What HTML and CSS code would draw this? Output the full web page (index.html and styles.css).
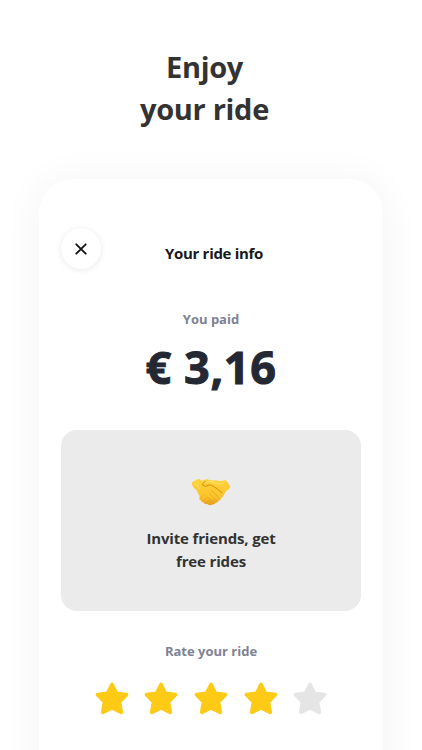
FILE: index.html
```html
<!DOCTYPE html>
<html lang="en">
<head>
<meta charset="utf-8">
<meta name="viewport" content="width=device-width, initial-scale=1">
<title>Your ride info</title>
<link rel="stylesheet" href="styles.css">
</head>
<body>
<svg class="defs" width="0" height="0" aria-hidden="true">
  <symbol id="star" viewBox="0 0 34 32">
    <path d="M17 2 21.4 10.8 31.4 12.2 24.4 19.4 26.2 29.8 17 25.4 7.8 29.8 9.6 19.4 2.6 12.2 12.6 10.8Z" fill="currentColor" stroke="currentColor" stroke-width="3.8" stroke-linejoin="round"/>
  </symbol>
</svg>
<main class="page">
  <h1 class="headline">Enjoy<br>your ride</h1>
  <section class="card">
    <header class="bar">
      <button class="close" aria-label="Close">
        <svg width="12" height="12" viewBox="0 0 12 12"><path d="M1.3 1.3 10.7 10.7M10.7 1.3 1.3 10.7" fill="none" stroke="#141619" stroke-width="1.9" stroke-linecap="round"/></svg>
      </button>
      <h2 class="title">Your ride info</h2>
    </header>
    <p class="label paid">You paid</p>
    <p class="amount">€ 3,16</p>
    <div class="invite">
      <svg class="hands" width="40" height="28" viewBox="0 0 40 28" aria-hidden="true">
        <defs>
          <linearGradient id="skin" x1="0" y1="0" x2="0" y2="1"><stop offset="0" stop-color="#ffd23b"/><stop offset=".7" stop-color="#fbc32b"/><stop offset="1" stop-color="#e39a16"/></linearGradient>
        </defs>
        <path d="M.8 5.8Q.5 4.2 1.8 3.7L6 1.4Q8 .6 9 1.5Q10.4 2.7 12 2.4Q14.5 .9 17.2 1.5L20.4 2.6Q24 1.6 27.5 2.8Q30.5 3.4 32.3 2.6Q34.4 1.6 35.6 3L39 7.8Q39.8 9.6 38.2 10.8Q35 12.6 33.8 15 33.2 17.4 31.4 19L30 20.2Q29.8 22.3 27.8 22.6 27 24.8 24.6 24.8 23.4 27 21.2 26.4 19.5 27.8 17.4 26.8L15.6 25.8Q13.3 26.6 12.5 24.3 10.3 24.4 10.2 22.4 7.8 21.9 8.3 19.7L8.7 18Q7 16 6.2 13.6Q5.6 11.4 3.2 10.2Q1.2 8.8.8 5.8Z" fill="url(#skin)"/>
        <path d="M14 3.2Q10.4 5.9 12 7.6 14.2 9.4 18 6.9L20.7 7.4Q25.7 9.8 30.9 14.8" fill="none" stroke="#d98b12" stroke-width="1" stroke-linecap="round"/>
        <path d="M20.1 12.3 28 19.4M17.8 15.2 25.3 22.1M16.6 19 22 24.2M9.6 20.4 12.5 17M12.2 23 15.8 19M15.5 25 18.5 21.7" fill="none" stroke="#e29b17" stroke-width=".6" stroke-linecap="round"/>
        <path d="M15.5 3.8Q19 2.8 23.6 4.8 28.5 6.4 32.5 5.2M4 6Q7 7.2 8.3 10.3" fill="none" stroke="#ffdf62" stroke-width="1.3" stroke-linecap="round"/>
      </svg>
      <p class="invite-text">Invite friends, get<br>free rides</p>
    </div>
    <p class="label rate">Rate your ride</p>
    <div class="stars">
      <svg class="star"><use href="#star"/></svg>
      <svg class="star"><use href="#star"/></svg>
      <svg class="star"><use href="#star"/></svg>
      <svg class="star"><use href="#star"/></svg>
      <svg class="star star-empty"><use href="#star"/></svg>
    </div>
  </section>
</main>
</body>
</html>
```
FILE: styles.css
```css
* { box-sizing: border-box; }
body, h1, h2, p { margin: 0; }
body {
  background: #fff;
  font-family: "Open Sans", "Noto Sans", sans-serif;
  font-weight: 700;
  text-align: center;
}
.defs { display: block; }
.page {
  height: 750px;
  padding: 46px 39px 0;
  overflow: hidden;
}
.headline {
  width: 331px;
  height: 84px;
  color: #333;
  font-size: 29px;
  line-height: 42px;
  letter-spacing: -.3px;
}
.card {
  width: 344px;
  height: 660px;
  margin-top: 49px;
  padding: 49px 22px 0;
  border-radius: 34px;
  background: #fff;
  box-shadow: 0 2px 40px rgba(0, 0, 0, .055);
}
.bar {
  display: grid;
  grid-template-columns: 41px 1fr 35px;
  height: 41px;
}
.close {
  display: grid;
  place-items: center;
  width: 40px;
  height: 41px;
  padding: 0;
  border: 0;
  border-radius: 50%;
  background: #fff;
  box-shadow: 0 1px 6px rgba(0, 0, 0, .09);
}
.title {
  padding-top: 14px;
  color: #17191c;
  font-size: 15px;
  line-height: 22px;
  letter-spacing: -.3px;
}
.label {
  color: #7d8294;
  font-size: 13px;
  line-height: 20px;
}
.paid { margin-top: 40px; }
.amount {
  margin-top: 8px;
  color: #242833;
  font-size: 45px;
  line-height: 60px;
  letter-spacing: .6px;
  -webkit-text-stroke: 1px #242833;
}
.invite {
  height: 181px;
  margin-top: 33px;
  padding-top: 48px;
  border-radius: 16px;
  background: #ebebeb;
}
.hands { display: block; margin: 0 auto; }
.invite-text {
  margin-top: 21px;
  color: #333;
  font-size: 15px;
  line-height: 23px;
  letter-spacing: -.15px;
}
.rate { margin-top: 30px; }
.stars {
  display: flex;
  justify-content: center;
  gap: 15.7px;
  margin-top: 21px;
  color: #fdcb16;
}
.star { width: 34px; height: 33px; }
.star-empty { color: #e5e5e5; }
```
